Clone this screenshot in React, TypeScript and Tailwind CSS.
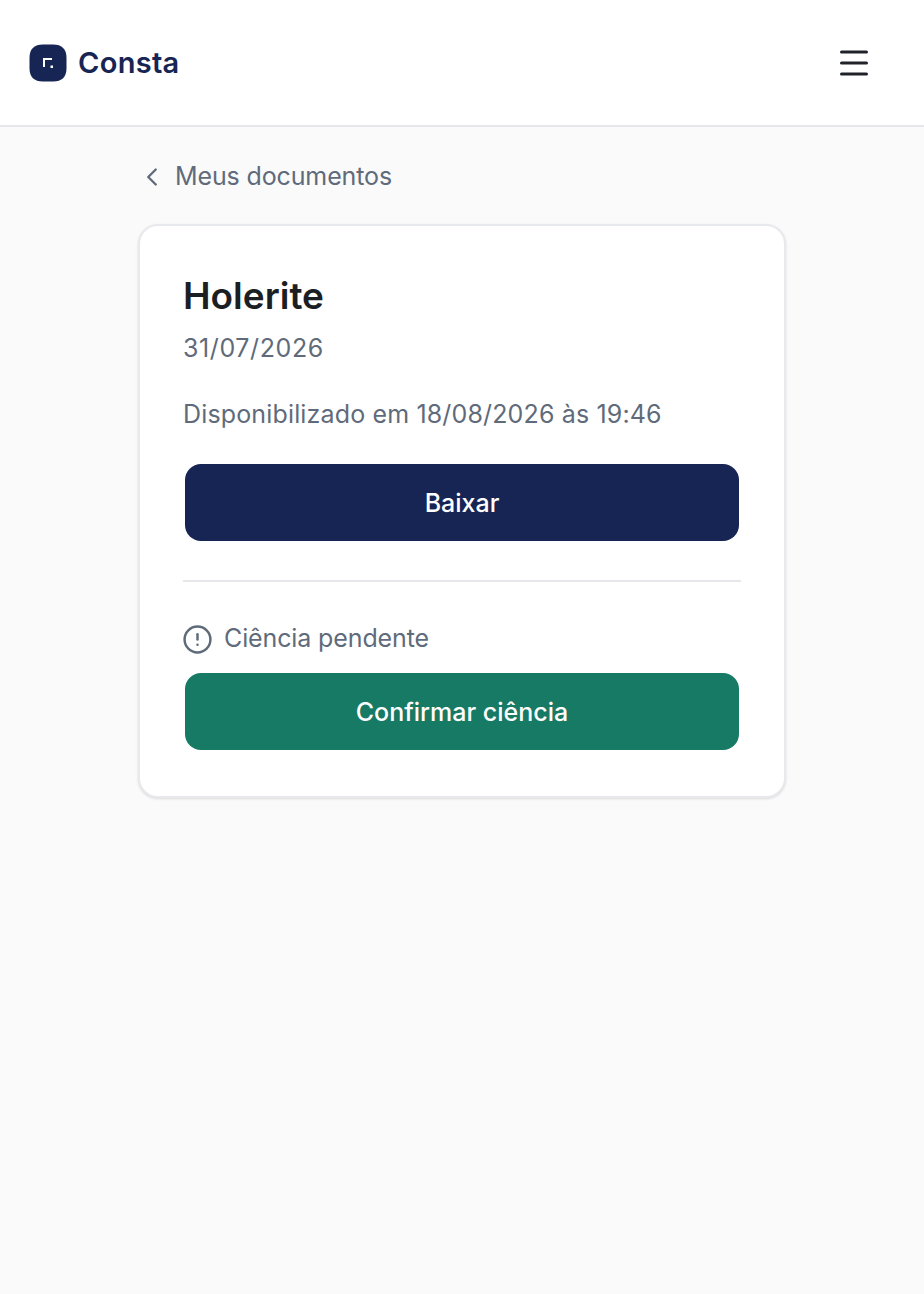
import { ChevronLeft, CircleAlert } from "lucide-react";

const ConstaLogo = () => {
  return (
    <svg width="38" height="38" viewBox="0 0 38 38" className="shrink-0">
      <path
        d="M14 0.5 H24 C33 0.5 37.5 5 37.5 14 V24 C37.5 33 33 37.5 24 37.5 H14 C5 37.5 0.5 33 0.5 24 V14 C0.5 5 5 0.5 14 0.5 Z"
        fill="#172554"
      />
      <path d="M15 23 V15 H23" fill="none" stroke="#fff" strokeWidth="2" />
      <rect x="21.5" y="21.5" width="2.5" height="2.5" fill="#fff" />
    </svg>
  );
};

const MenuIcon = () => {
  return (
    <svg width="28" height="26" viewBox="0 0 28 26">
      <path
        d="M1.5 2 H26.5 M1.5 13 H26.5 M1.5 24 H26.5"
        stroke="#1f2329"
        strokeWidth="3"
        strokeLinecap="round"
      />
    </svg>
  );
};

const App = () => {
  return (
    <div className="min-h-[1294px] bg-[#fafafa] font-['Inter',sans-serif]">
      <header className="h-[127px] bg-white border-b-2 border-[#e5e7eb] flex items-center justify-between pl-[29px] pr-[56px]">
        <div className="flex items-center gap-[11px]">
          <ConstaLogo />
          <span className="text-[29px] font-semibold tracking-[0.3px] text-[#172554]">Consta</span>
        </div>
        <MenuIcon />
      </header>
      <main className="w-[648px] mx-auto">
        <a className="flex items-center gap-[8px] h-[97px] pt-[2px] -ml-[1px] text-[#5f6b7a]">
          <ChevronLeft size={30} strokeWidth={1.9} />
          <span className="text-[25px] tracking-[-0.13px]">Meus documentos</span>
        </a>
        <section className="bg-white border-2 border-[#e8e9ec] rounded-[20px] shadow-sm h-[574px] px-[43px] pt-[45px]">
          <h1 className="text-[37px] leading-[50px] font-semibold text-[#1b1f24]">Holerite</h1>
          <p className="mt-[8px] text-[25px] leading-[38px] tracking-[0.6px] text-[#5f6b7a]">31/07/2026</p>
          <p className="mt-[28px] text-[25px] leading-[38px] tracking-[0.15px] text-[#5f6b7a]">
            Disponibilizado em 18/08/2026 às 19:46
          </p>
          <button className="block mt-[31px] mx-[2px] w-[554px] h-[77px] pt-[2px] rounded-[16px] bg-[#172554] text-white text-[25px] font-medium">
            Baixar
          </button>
          <hr className="mt-[39px] border-0 h-[2px] bg-[#e5e7eb]" />
          <div className="mt-[38px] flex items-center gap-[11px] h-[38px] -ml-[1px] text-[#5f6b7a]">
            <CircleAlert size={31} strokeWidth={1.9} />
            <span className="text-[25px] tracking-[-0.12px]">Ciência pendente</span>
          </div>
          <button className="block mt-[15px] mx-[2px] w-[554px] h-[77px] pt-[2px] rounded-[16px] bg-[#177a65] text-white text-[25px] font-medium">
            Confirmar ciência
          </button>
        </section>
      </main>
    </div>
  );
};

export default App;
